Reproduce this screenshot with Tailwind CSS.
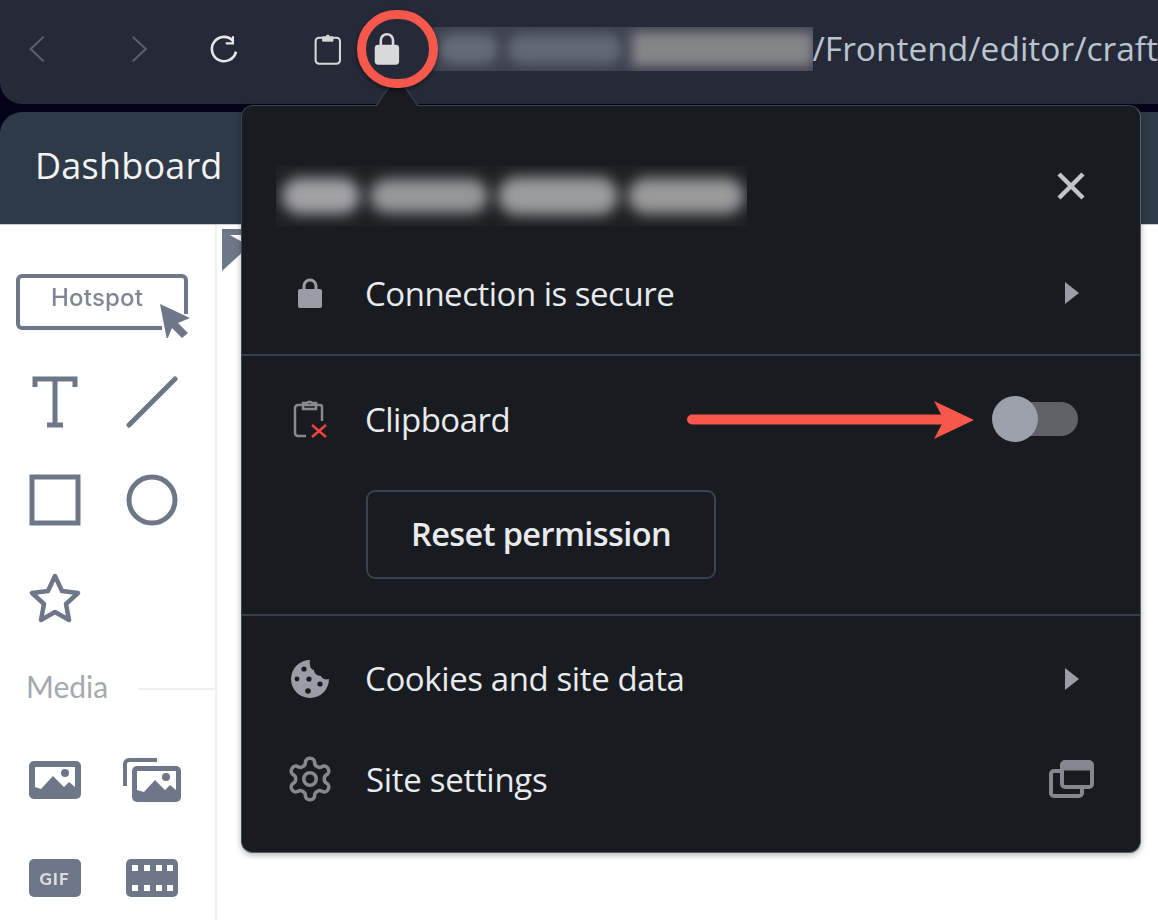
<!DOCTYPE html>
<html lang="en">
<head>
    <meta charset="UTF-8">
    <meta name="viewport" content="width=device-width, initial-scale=1.0">
    <title>Clipboard permission</title>
    <script src="https://cdn.jsdelivr.net/npm/@tailwindcss/browser@4"></script>
</head>
<body class="bg-white font-['Open_Sans',sans-serif]">
<div class="relative w-[1158px] h-[920px] overflow-hidden bg-[#03031a]">

    <!-- browser toolbar -->
    <div class="h-[104px] bg-[#262a38] rounded-bl-[22px] flex items-center pb-[6px] overflow-hidden">
        <svg class="ml-[28px] w-[20px] h-[34px]" viewBox="0 0 20 34" fill="none" stroke="#5b5f6b" stroke-width="2.4"><path d="M18 3 3 17l15 14"/></svg>
        <svg class="ml-[86px] w-[20px] h-[34px]" viewBox="0 0 20 34" fill="none" stroke="#5b5f6b" stroke-width="2.4"><path d="M2 3l15 14L2 31"/></svg>
        <svg class="ml-[60px] w-[36px] h-[36px]" viewBox="0 0 36 36" fill="none" stroke="#e6e7e9" stroke-width="3"><path d="M31 21a14 14 0 1 1-3-12"/><path d="M28 4v8h-8v-1h7V4z" fill="#e6e7e9" stroke-width="1.5"/></svg>
        <svg class="ml-[73px] w-[34px] h-[38px]" viewBox="0 0 34 38" fill="none" stroke="#d5d6d8" stroke-width="2.4"><rect x="3" y="6" width="28" height="30" rx="4"/><path d="M11 5h4a2 2 0 0 1 4 0h4v5H11z" fill="#d5d6d8" stroke-width="1"/></svg>
        <svg class="ml-[30px] w-[32px] h-[38px]" viewBox="0 0 32 38"><path d="M9 16V9a7 7 0 0 1 14 0v7" fill="none" stroke="#d9dadc" stroke-width="3"/><rect x="2" y="14" width="28" height="23" rx="4" fill="#d9dadc"/></svg>
        <div class="relative ml-[32px] w-[380px] h-[44px] bg-[#3f4351] overflow-hidden shrink-0">
            <div class="absolute inset-0 flex items-center gap-[10px] pl-[6px] blur-[6px]">
                <div class="w-[62px] h-[30px] rounded-full bg-[#656b79]"></div>
                <div class="w-[120px] h-[30px] rounded-full bg-[#626876]"></div>
                <div class="w-[190px] h-[34px] bg-[#85868a]"></div>
            </div>
        </div>
        <span class="text-[33.500px] leading-none text-[#b9c4d0] whitespace-nowrap shrink-0">/Frontend/editor/craft</span>
    </div>

    <!-- page under the popup -->
    <div class="mt-[8px] h-[112px] bg-[#2f3a48] rounded-tl-[22px] flex items-center pl-[35px] pb-[4px]">
        <span class="text-[36px] font-medium text-[#f2f3f5] leading-none tracking-[0.2px]">Dashboard</span>
    </div>
    <div class="h-[696px] bg-white flex border-t border-[#c9ccd0]">
        <aside class="w-[217px] shrink-0 border-r-2 border-[#eeeff1] pt-[49px]">
            <div class="relative ml-[16px] w-[170px] h-[56px] blur-[0.5px]">
                <svg class="absolute inset-0 w-[176px] h-[64px]" viewBox="0 0 176 64" fill="none"><path d="M146 54H6a4 4 0 0 1-4-4V6a4 4 0 0 1 4-4h160a4 4 0 0 1 4 4v34" stroke="#6e7787" stroke-width="4"/><path d="M144 30l30 14-12 5 10 10-6 5-10-10-5 12z" fill="#6e7787"/></svg>
                <span class="absolute left-[35px] top-[12px] text-[24px] leading-none font-['Inter',sans-serif] font-medium tracking-[0.2px] text-[#7f8793]">Hotspot</span>
            </div>
            <div class="grid grid-cols-[97px_97px] auto-rows-[98px] ml-[6px] mt-[23px] blur-[0.5px]">
                <div class="flex items-center justify-center">
                    <svg class="w-[46px] h-[54px]" viewBox="0 0 46 54" fill="none" stroke="#6e7787" stroke-width="5"><path d="M3 12V4h40v8M23 4v46M15 50h16"/></svg>
                </div>
                <div class="flex items-center justify-center">
                    <svg class="w-[52px] h-[52px]" viewBox="0 0 52 52" fill="none" stroke="#6e7787" stroke-width="5" stroke-linecap="round"><path d="M3 49 49 3"/></svg>
                </div>
                <div class="flex items-center justify-center">
                    <svg class="w-[52px] h-[52px]" viewBox="0 0 52 52" fill="none" stroke="#6e7787" stroke-width="5"><rect x="3" y="3" width="46" height="46"/></svg>
                </div>
                <div class="flex items-center justify-center">
                    <svg class="w-[52px] h-[52px]" viewBox="0 0 52 52" fill="none" stroke="#6e7787" stroke-width="5"><circle cx="26" cy="26" r="23"/></svg>
                </div>
                <div class="flex items-center justify-center">
                    <svg class="w-[52px] h-[50px]" viewBox="0 0 52 50" fill="none" stroke="#6e7787" stroke-width="4.500" stroke-linejoin="round"><path d="m26 3 7 15 16 2-12 11 3 16-14-8-14 8 3-16L3 20l16-2z"/></svg>
                </div>
            </div>
            <div class="flex items-center ml-[26px] mt-[19px] h-[40px]">
                <span class="text-[30px] leading-none font-['Lato',sans-serif] text-[#a5a9ae]">Media</span>
                <div class="ml-[30px] flex-1 h-[2px] mt-[6px] bg-[#eeeff1]"></div>
            </div>
            <div class="grid grid-cols-[97px_97px] auto-rows-[98px] ml-[6px] mt-[25px] blur-[0.5px]">
                <div class="flex items-center justify-center">
                    <svg class="w-[52px] h-[38px]" viewBox="0 0 52 38"><rect width="52" height="38" rx="5" fill="#6e7787"/><path d="M6 26V6h40v20l-6-5-5 5-11-11-12 13z" fill="#fff"/><circle cx="36" cy="12" r="4" fill="#6e7787"/></svg>
                </div>
                <div class="flex items-center justify-center">
                    <svg class="w-[58px] h-[44px]" viewBox="0 0 58 44"><path d="M2 28V6a4 4 0 0 1 4-4h28" fill="none" stroke="#6e7787" stroke-width="4"/><rect x="9" y="8" width="49" height="36" rx="5" fill="#6e7787"/><path d="M14 32V13h39v19l-6-5-5 5-10-10-11 12z" fill="#fff"/><circle cx="43" cy="19" r="4" fill="#6e7787"/></svg>
                </div>
                <div class="flex items-center justify-center">
                    <div class="w-[52px] h-[38px] rounded-[5px] bg-[#6e7787] flex items-center justify-center font-['Lato',sans-serif] font-black text-[17px] leading-none tracking-[1px] text-[#d9dce0]">GIF</div>
                </div>
                <div class="flex items-center justify-center">
                    <svg class="w-[52px] h-[38px]" viewBox="0 0 52 38" fill="#fff"><rect width="52" height="38" rx="5" fill="#6e7787"/><rect x="6" y="6" width="6" height="6"/><rect x="18" y="6" width="6" height="6"/><rect x="30" y="6" width="6" height="6"/><rect x="41" y="6" width="6" height="6"/><rect x="6" y="26" width="6" height="6"/><rect x="18" y="26" width="6" height="6"/><rect x="30" y="26" width="6" height="6"/><rect x="41" y="26" width="6" height="6"/></svg>
                </div>
            </div>
        </aside>
        <div class="flex-1 pl-[5px] pt-[4px] blur-[0.5px]">
            <svg class="w-[24px] h-[42px]" viewBox="0 0 24 42"><path d="M0 0h24v20L0 42z" fill="#6e7787"/><path d="M8 6h14v8z" fill="#fff"/></svg>
        </div>
    </div>

    <!-- popup pointer -->
    <svg class="absolute left-[374px] top-[86px] z-10 w-[46px] h-[22px]" viewBox="0 0 46 22"><path d="M2 20 15 1h16l13 19" fill="#181b1f" stroke="#333b46" stroke-width="1.500"/><path d="M4 22 16 3h14l12 19z" fill="#181b1f"/></svg>

    <!-- site info popup -->
    <div class="absolute left-[241px] top-[105px] w-[900px] h-[748px] bg-[#181b1f] rounded-[12px] border border-[#3c4652] border-b-[#59606a] border-r-[#59606a] shadow-[0_2px_6px_rgba(0,0,0,0.3)] text-[#e8eaed]">
        <div class="h-[126px] flex items-start pl-[34px] pr-[54px] pt-[60px]">
            <div class="relative w-[471px] h-[60px] bg-[#1e2024] overflow-hidden">
                <div class="absolute inset-0 flex items-center gap-[10px] pl-[6px] blur-[7px]">
                    <div class="w-[78px] h-[36px] rounded-full bg-[#a1a1a6]"></div>
                    <div class="w-[118px] h-[34px] rounded-full bg-[#96979b]"></div>
                    <div class="w-[120px] h-[38px] rounded-full bg-[#9a9c9e]"></div>
                    <div class="w-[116px] h-[36px] rounded-full bg-[#9a9a9b]"></div>
                </div>
            </div>
            <svg class="ml-auto mt-[5px] w-[30px] h-[30px]" viewBox="0 0 30 30" stroke="#c2c5c9" stroke-width="4.500"><path d="M3 3l24 24M27 3 3 27"/></svg>
        </div>

        <div class="h-[122px] flex items-center pl-[56px] pr-[60px]">
            <svg class="w-[24px] h-[30px]" viewBox="0 0 24 30"><path d="M6 13V8a6 6 0 0 1 12 0v5" fill="none" stroke="#9a9da4" stroke-width="3"/><rect y="11" width="24" height="19" rx="2" fill="#9a9da4"/></svg>
            <span class="ml-[43px] text-[33px] leading-none tracking-[-0.5px]">Connection is secure</span>
            <svg class="ml-auto w-[16px] h-[24px]" viewBox="0 0 16 24"><path d="M1 1l14 11L1 23z" fill="#9a9da4"/></svg>
        </div>

        <div class="h-[260px] border-t-2 border-[#353e49]">
            <div class="h-[126px] flex items-center pl-[50px] pr-[62px]">
                <svg class="w-[38px] h-[40px]" viewBox="0 0 38 40" fill="none"><path d="M14 37H6a3 3 0 0 1-3-3V9a3 3 0 0 1 3-3h22a2 2 0 0 1 2 2v14" stroke="#85888e" stroke-width="2.500"/><path d="M11 4h4a3 3 0 0 1 5 0h4v6H11z" stroke="#85888e" stroke-width="2.500"/><path d="M20 26l14 12M34 26 20 38" stroke="#f0433c" stroke-width="2.500"/></svg>
                <span class="ml-[35px] text-[33px] leading-none tracking-[-0.5px]">Clipboard</span>
                <div class="relative ml-auto w-[86px] h-[46px]">
                    <div class="absolute right-0 top-[6px] w-[64px] h-[34px] rounded-full bg-[#5f6368]"></div>
                    <div class="absolute left-0 top-0 w-[46px] h-[46px] rounded-full bg-[#9ca0aa]"></div>
                </div>
            </div>
            <div class="pl-[124px] pt-[8px]">
                <button class="w-[350px] h-[89px] rounded-[9px] border-2 border-[#3a424c] text-[32.500px] font-semibold leading-none tracking-[-0.6px] text-[#e8eaed]">Reset permission</button>
            </div>
        </div>

        <div class="border-t-2 border-[#353e49] pt-[11px]">
            <div class="h-[103px] flex items-center pl-[48px] pr-[60px]">
                <svg class="w-[40px] h-[40px]" viewBox="0 0 40 40"><path d="M20 1a19 19 0 1 0 19 19c-3 1-7 0-8-3-4 0-7-3-7-6-3 0-5-5-4-10z" fill="#9a9da4"/><g fill="#181b1f"><circle cx="14" cy="10" r="2.600"/><circle cx="7" cy="20" r="2.400"/><circle cx="19" cy="20" r="2.600"/><circle cx="30" cy="25" r="2.600"/><circle cx="18" cy="32" r="2.800"/></g></svg>
                <span class="ml-[35px] text-[33px] leading-none tracking-[-0.4px]">Cookies and site data</span>
                <svg class="ml-auto w-[16px] h-[24px]" viewBox="0 0 16 24"><path d="M1 1l14 11L1 23z" fill="#9a9da4"/></svg>
            </div>
            <div class="h-[98px] flex items-center pl-[43px] pr-[46px]">
                <svg class="w-[50px] h-[50px]" viewBox="0 0 24 24" fill="none" stroke="#85888e" stroke-width="1.700"><path d="M12.220 2h-.44a2 2 0 0 0-2 2v.18a2 2 0 0 1-1 1.730l-.43.25a2 2 0 0 1-2 0l-.15-.08a2 2 0 0 0-2.730.73l-.22.38a2 2 0 0 0 .73 2.730l.15.1a2 2 0 0 1 1 1.720v.51a2 2 0 0 1-1 1.740l-.15.09a2 2 0 0 0-.73 2.730l.22.38a2 2 0 0 0 2.730.73l.15-.08a2 2 0 0 1 2 0l.43.25a2 2 0 0 1 1 1.730V20a2 2 0 0 0 2 2h.44a2 2 0 0 0 2-2v-.18a2 2 0 0 1 1-1.730l.43-.25a2 2 0 0 1 2 0l.15.08a2 2 0 0 0 2.730-.73l.22-.39a2 2 0 0 0-.73-2.730l-.15-.08a2 2 0 0 1-1-1.740v-.5a2 2 0 0 1 1-1.740l.15-.09a2 2 0 0 0 .73-2.730l-.22-.38a2 2 0 0 0-2.730-.73l-.15.08a2 2 0 0 1-2 0l-.43-.25a2 2 0 0 1-1-1.730V4a2 2 0 0 0-2-2z"/><circle cx="12" cy="12" r="3"/></svg>
                <span class="ml-[31px] text-[33px] leading-none tracking-[-0.3px]">Site settings</span>
                <svg class="ml-auto w-[46px] h-[40px]" viewBox="0 0 46 40" fill="none" stroke="#85888e" stroke-width="4"><path d="M14 12H6a3 3 0 0 0-3 3v19a3 3 0 0 0 3 3h25a3 3 0 0 0 3-3v-6"/><rect x="14" y="3" width="30" height="25" rx="3"/><path d="M14 8h30" stroke-width="7"/></svg>
            </div>
        </div>
    </div>

    <!-- red ring around the padlock -->
    <div class="absolute left-[357px] top-[10px] z-20 w-[81px] h-[78px] rounded-full border-[9px] border-[#f8574b] shadow-[0_2px_4px_rgba(0,0,0,0.5)]"></div>

    <!-- red annotation arrow -->
    <svg class="absolute left-[684px] top-[398px] w-[294px] h-[44px]" viewBox="0 0 294 44"><path d="M8 21.500h250" stroke="#f8574b" stroke-width="10" stroke-linecap="round"/><path d="M250 3l40 19-40 19 10-19z" fill="#f8574b"/></svg>
</div>
</body>
</html>
